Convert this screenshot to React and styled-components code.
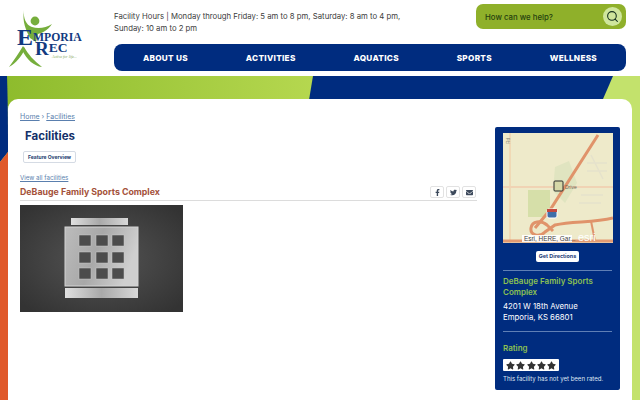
import styled, { createGlobalStyle } from 'styled-components';
import { Search } from 'lucide-react';
import { FaFacebookF, FaTwitter, FaEnvelope, FaStar } from 'react-icons/fa';

const GlobalStyle = createGlobalStyle`
    html, body {
        margin: 0;
        height: 400px;
        overflow: hidden;
        background: #fff;
    }
    * { box-sizing: border-box; }
    body { font-family: "Inter", "Liberation Sans", sans-serif; }
`;

const navy = '#002c7f';

const Page = styled.div`
    display: flex;
    flex-direction: column;
    width: 640px;
    height: 400px;
`;

const Header = styled.header`
    display: flex;
    height: 76px;
    padding: 0 14px 0 8px;
    gap: 30px;
`;

const Logo = styled.svg`
    width: 76px;
    height: 75px;
    flex: none;
`;

const HeaderRight = styled.div`
    flex: 1;
    display: flex;
    flex-direction: column;
`;

const TopRow = styled.div`
    display: flex;
    justify-content: space-between;
    height: 44px;
    padding-top: 4px;
`;

const Hours = styled.p`
    margin: 6px 0 0;
    width: 300px;
    font-size: 7.76px;
    line-height: 12px;
    color: #3c3c3c;
`;

const SearchBox = styled.div`
    display: flex;
    align-items: center;
    justify-content: space-between;
    width: 150px;
    height: 25px;
    padding: 0 4px 0 9px;
    border-radius: 7px;
    background: #8fb02a;
    color: #25400f;
    font-size: 7.8px;
    font-weight: 500;
`;

const SearchButton = styled.span`
    display: flex;
    align-items: center;
    justify-content: center;
    width: 19px;
    height: 19px;
    border-radius: 50%;
    background: #cfe69c;
    color: #17331f;
`;

const Nav = styled.nav`
    display: flex;
    justify-content: space-around;
    align-items: center;
    height: 27px;
    border-radius: 8px;
    background: ${navy};
`;

const NavItem = styled.a`
    color: #fff;
    font-size: 8.2px;
    font-weight: 800;
    letter-spacing: 0.3px;
`;

const Band = styled.div`
    position: relative;
    flex: 1;
    min-height: 0;
    padding: 23px 8px 0;
`;

const BandArt = styled.svg`
    position: absolute;
    top: 0;
    left: 0;
    width: 640px;
    height: 324px;
`;

const Card = styled.div`
    position: relative;
    display: flex;
    gap: 18px;
    height: 301px;
    padding: 0 12px;
    border-radius: 10px 10px 0 0;
    background: #fff;
`;

const Main = styled.main`
    flex: 1;
    min-width: 0;
    padding-top: 13px;
`;

const Breadcrumb = styled.div`
    font-size: 7px;
    line-height: 9px;
    color: #5a7fae;

    & a { text-decoration: underline; }
`;

const Title = styled.h1`
    margin: 8px 0 0 5px;
    font-size: 11.5px;
    line-height: 14px;
    font-weight: 700;
    color: #14306a;
`;

const TabButton = styled.span`
    display: inline-block;
    margin: 8px 0 0 3px;
    padding: 0 4px;
    height: 12px;
    border: 1px solid #d5dbe4;
    border-radius: 2px;
    font-size: 5px;
    line-height: 10px;
    font-weight: 700;
    color: #24406f;
`;

const AllLink = styled.a`
    display: block;
    margin-top: 10px;
    font-size: 6.2px;
    line-height: 9px;
    color: #5a7fae;
    text-decoration: underline;
`;

const FacilityHead = styled.div`
    display: flex;
    justify-content: space-between;
    align-items: flex-end;
    margin-top: 1px;
    height: 18px;
    padding: 0 1px 2px 0;
    border-bottom: 1px solid #dcdcdc;
`;

const FacilityName = styled.h2`
    margin: 0 0 0;
    font-size: 8.8px;
    line-height: 12px;
    font-weight: 700;
    color: #a4513a;
`;

const Share = styled.div`
    display: flex;
    gap: 2px;
`;

const ShareButton = styled.span`
    display: flex;
    align-items: center;
    justify-content: center;
    width: 14px;
    height: 12px;
    border: 1px solid #e2e2e2;
    border-radius: 2px;
    font-size: 7px;
    color: #3d4a5c;
`;

const Photo = styled.svg`
    display: block;
    width: 163px;
    height: 107px;
    margin-top: 4px;
`;

const Aside = styled.aside`
    flex: none;
    align-self: flex-start;
    width: 125px;
    height: 263px;
    margin-top: 28px;
    padding: 6px 8px 0;
    border-radius: 2px;
    background: ${navy};
    color: #fff;
`;

const MapArt = styled.svg`
    display: block;
    width: 110px;
    height: 110px;
`;

const Directions = styled.span`
    display: block;
    width: 43px;
    height: 11px;
    margin: 8px auto 0;
    border-radius: 2px;
    background: #fff;
    color: #1f4179;
    font-size: 5.4px;
    line-height: 11px;
    font-weight: 700;
    text-align: center;
    white-space: nowrap;
`;

const Rule = styled.hr`
    margin: ${props => props.$top}px 0 0;
    border: 0;
    border-top: 1px solid #5f7fb5;
`;

const SideHeading = styled.h3`
    margin: ${props => props.$top}px 0 0;
    font-size: 8px;
    line-height: 11px;
    font-weight: 600;
    color: #8cc152;
`;

const Address = styled.p`
    margin: 3px 0 0;
    font-size: 7.8px;
    line-height: 11px;
`;

const Stars = styled.div`
    display: flex;
    align-items: center;
    justify-content: space-between;
    width: 56px;
    height: 12px;
    margin-top: 5px;
    padding: 0 3px;
    border-radius: 1px;
    background: #fff;
    color: #333;
    font-size: 9px;
`;

const RateNote = styled.p`
    margin: 3px 0 0;
    font-size: 6.05px;
    line-height: 9px;
    white-space: nowrap;
    color: #dfe6f2;
`;

const navLinks = ['ABOUT US', 'ACTIVITIES', 'AQUATICS', 'SPORTS', 'WELLNESS'];

const LogoMark = () => (
    <Logo viewBox="8 0 76 75">
        <g fill="#76ae3c">
            <circle cx="35" cy="21" r="4.4" />
            <path d="M24 10 C23 18 26 25 32 27 C38 29 46 28 52 24 C47 31 42 33 38 34 L36 42 L30 38 C26 30 22 22 24 10 Z" />
            <path d="M23 46 L25 49 C21 57 16 63 9 67 C14 60 19 53 23 46 Z" />
            <path d="M24 47 C28 54 34 61 42 67 C34 66 27 60 22 50 Z" />
        </g>
        <g fill="#123a80" fontFamily="'Liberation Serif', serif" fontWeight="700">
            <text x="17" y="45">
                <tspan fontSize="24">E</tspan>
                <tspan fontSize="11.7" dy="-4">MPORIA</tspan>
            </text>
            <text x="35" y="55">
                <tspan fontSize="19">R</tspan>
                <tspan fontSize="13.5" dy="-3">EC</tspan>
            </text>
        </g>
        <text x="52" y="57.5" fontSize="4" fontStyle="italic" fill="#84a85c" fontFamily="'Liberation Serif', serif">Active for life...</text>
    </Logo>
);

const BuildingPhoto = () => (
    <Photo viewBox="0 0 163 107">
        <defs>
            <radialGradient id="photoBg" cx="50%" cy="50%" r="65%">
                <stop offset="0" stopColor="#555" />
                <stop offset="1" stopColor="#333" />
            </radialGradient>
            <linearGradient id="metal" x1="0" y1="0" x2="1" y2="0.3">
                <stop offset="0" stopColor="#bcbcbc" />
                <stop offset="0.5" stopColor="#a8a8a8" />
                <stop offset="1" stopColor="#cfcfcf" />
            </linearGradient>
            <linearGradient id="bar" x1="0" y1="0" x2="1" y2="0">
                <stop offset="0" stopColor="#e0e0e0" />
                <stop offset="0.5" stopColor="#a9a9a9" />
                <stop offset="1" stopColor="#d8d8d8" />
            </linearGradient>
        </defs>
        <rect width="163" height="107" fill="url(#photoBg)" />
        <rect x="51" y="13" width="57" height="7" fill="url(#bar)" />
        <rect x="45" y="22" width="73" height="59" fill="url(#metal)" stroke="#d4d4d4" strokeWidth="1" />
        {[59, 76, 92].map(x => [30, 47, 63].map(y => (
            <rect key={`${x}-${y}`} x={x} y={y} width="12" height="11" fill="#4c4c4c" stroke="#c9c9c9" strokeWidth="0.5" />
        )))}
        <rect x="45" y="83" width="73" height="10" fill="url(#bar)" />
    </Photo>
);

const FacilityMap = () => (
    <MapArt viewBox="0 0 110 110">
        <rect width="110" height="110" fill="#eeeaca" />
        <path d="M52 34 L66 28 L74 50 L62 70 L50 58 Z" fill="#e0e4c0" />
        <rect x="25" y="57" width="22" height="27" fill="#d6dfa9" />
        <path d="M84 30 H104 M84 38 H104 M88 22 L100 46 M78 62 H100 M76 70 H98" stroke="#e5e2cc" strokeWidth="1.5" fill="none" />
        <path d="M7 0 V110" stroke="#f0d9b5" strokeWidth="2" />
        <path d="M0 54 H110" stroke="#f0d3b4" strokeWidth="2" />
        <path d="M95 2 L47 77 L32 95" stroke="#e0936a" strokeWidth="3" fill="none" />
        <path d="M110 85 C90 90 70 88 52 92 L42 99 C36 105 27 102 28 95 C29 88 38 87 44 92 L50 98" stroke="#e0936a" strokeWidth="3" fill="none" />
        <path d="M88 88 L92 108" stroke="#e0936a" strokeWidth="2" fill="none" />
        <path d="M0 108 H110" stroke="#e39a72" strokeWidth="3" />
        <rect x="44" y="76" width="10" height="9" rx="2" fill="#3f6ea8" stroke="#fff" strokeWidth="1" />
        <rect x="44" y="76" width="10" height="3" fill="#c4483f" />
        <rect x="51" y="48" width="9" height="10" rx="1" fill="#d5d8a8" stroke="#2c2c2c" strokeWidth="1" />
        <text x="62" y="56" fontSize="5" fill="#6a6a55" fontFamily="'Liberation Sans', sans-serif">Drive</text>
        <text x="7" y="11" fontSize="5" fill="#8f8f80" fontFamily="'Liberation Sans', sans-serif" transform="rotate(-90 7 11)">Rd</text>
        <rect x="19" y="102" width="50" height="7" fill="#fff" opacity="0.9" />
        <text x="21" y="108" fontSize="6.4" fill="#444" fontFamily="'Liberation Sans', sans-serif">Esri, HERE, Gar...</text>
        <text x="75" y="108" fontSize="11" fill="#fff" fontFamily="'Liberation Sans', sans-serif">esri</text>
    </MapArt>
);

export default function App() {
    return (
        <Page>
            <GlobalStyle />
            <Header>
                <LogoMark />
                <HeaderRight>
                    <TopRow>
                        <Hours>Facility Hours | Monday through Friday: 5 am to 8 pm, Saturday: 8 am to 4 pm, Sunday: 10 am to 2 pm</Hours>
                        <SearchBox>
                            How can we help?
                            <SearchButton><Search size={13} strokeWidth={2} /></SearchButton>
                        </SearchBox>
                    </TopRow>
                    <Nav>
                        {navLinks.map(link => <NavItem key={link}>{link}</NavItem>)}
                    </Nav>
                </HeaderRight>
            </Header>
            <Band>
                <BandArt viewBox="0 0 640 324">
                    <defs>
                        <linearGradient id="limeBand" x1="0" y1="0" x2="1" y2="0">
                            <stop offset="0" stopColor="#8dbb2c" />
                            <stop offset="1" stopColor="#b6d850" />
                        </linearGradient>
                    </defs>
                    <rect width="640" height="324" fill="#c3e26c" />
                    <rect width="320" height="30" fill="url(#limeBand)" />
                    <path d="M313 0 H613 L600 30 H308 Z" fill={navy} />
                    <path d="M0 0 H7 C8 30 8 60 8 76 L0 86 Z" fill={navy} />
                    <path d="M0 86 L8 76 V324 H0 Z" fill="#e0592a" />
                </BandArt>
                <Card>
                    <Main>
                        <Breadcrumb><a>Home</a> › <a>Facilities</a></Breadcrumb>
                        <Title>Facilities</Title>
                        <TabButton>Feature Overview</TabButton>
                        <AllLink>View all facilities</AllLink>
                        <FacilityHead>
                            <FacilityName>DeBauge Family Sports Complex</FacilityName>
                            <Share>
                                <ShareButton><FaFacebookF /></ShareButton>
                                <ShareButton><FaTwitter /></ShareButton>
                                <ShareButton><FaEnvelope /></ShareButton>
                            </Share>
                        </FacilityHead>
                        <BuildingPhoto />
                    </Main>
                    <Aside>
                        <FacilityMap />
                        <Directions>Get Directions</Directions>
                        <Rule $top={8} />
                        <SideHeading $top={5}>DeBauge Family Sports Complex</SideHeading>
                        <Address>4201 W 18th Avenue<br />Emporia, KS 66801</Address>
                        <Rule $top={8} />
                        <SideHeading $top={11}>Rating</SideHeading>
                        <Stars>
                            {[1, 2, 3, 4, 5].map(n => <FaStar key={n} />)}
                        </Stars>
                        <RateNote>This facility has not yet been rated.</RateNote>
                    </Aside>
                </Card>
            </Band>
        </Page>
    );
}
